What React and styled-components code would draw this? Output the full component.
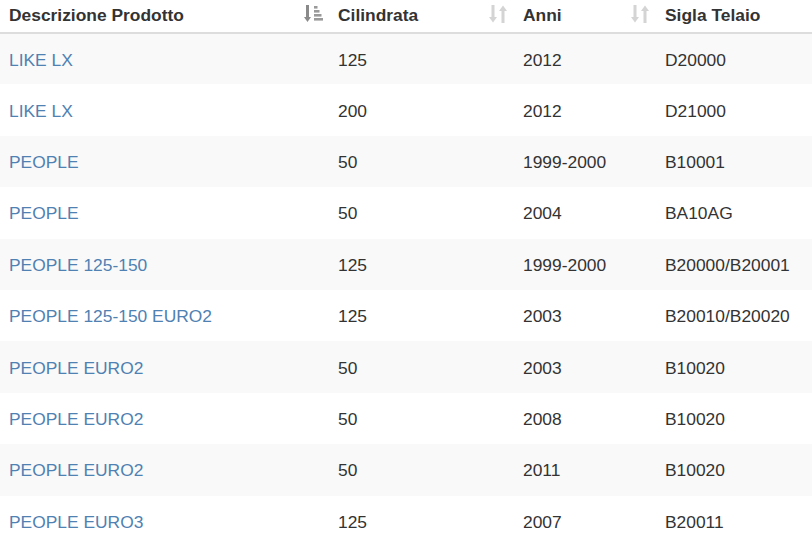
import React from "react";
import styled, { createGlobalStyle } from "styled-components";

const rows = [
  ["LIKE LX", "125", "2012", "D20000"],
  ["LIKE LX", "200", "2012", "D21000"],
  ["PEOPLE", "50", "1999-2000", "B10001"],
  ["PEOPLE", "50", "2004", "BA10AG"],
  ["PEOPLE 125-150", "125", "1999-2000", "B20000/B20001"],
  ["PEOPLE 125-150 EURO2", "125", "2003", "B20010/B20020"],
  ["PEOPLE EURO2", "50", "2003", "B10020"],
  ["PEOPLE EURO2", "50", "2008", "B10020"],
  ["PEOPLE EURO2", "50", "2011", "B10020"],
  ["PEOPLE EURO3", "125", "2007", "B20011"],
];

const GlobalStyle = createGlobalStyle`
  body {
    margin: 0;
    background: #fff;
    font-family: "Liberation Sans", Arial, sans-serif;
    font-size: 17.4px;
    color: #333;
  }
`;

// sort icons (font-awesome style)
const SortAmount = () => (
  <svg width="19" height="18" viewBox="0 0 19 18">
    <rect x="2" y="0" width="3" height="13" fill="#8a8a8a" />
    <path d="M0 12 L7 12 L3.5 17 Z" fill="#8a8a8a" />
    <rect x="10" y="1" width="3.5" height="2.6" fill="#9a9a9a" />
    <rect x="10" y="5" width="5.5" height="2.6" fill="#9a9a9a" />
    <rect x="10" y="9" width="7.5" height="2.6" fill="#9a9a9a" />
    <rect x="10" y="13" width="9" height="2.6" fill="#9a9a9a" />
  </svg>
);

const SortBoth = () => (
  <svg width="19" height="18" viewBox="0 0 19 18">
    <rect x="2.5" y="0" width="3" height="13" fill="#d4d4d4" />
    <path d="M0 12 L8 12 L4 17.5 Z" fill="#d4d4d4" />
    <rect x="12.5" y="5" width="3" height="13" fill="#d4d4d4" />
    <path d="M10 6 L18 6 L14 0.5 Z" fill="#d4d4d4" />
  </svg>
);

const App = () => {
  return (
    <>
      <GlobalStyle />
      <Table>
        <colgroup>
          <col style={{ width: 330 }} />
          <col style={{ width: 185 }} />
          <col style={{ width: 142 }} />
          <col />
        </colgroup>
        <thead>
          <tr>
            <Th>
              Descrizione Prodotto
              <Icon>
                <SortAmount />
              </Icon>
            </Th>
            <Th>
              Cilindrata
              <Icon>
                <SortBoth />
              </Icon>
            </Th>
            <Th>
              Anni
              <Icon>
                <SortBoth />
              </Icon>
            </Th>
            <Th>Sigla Telaio</Th>
          </tr>
        </thead>
        <tbody>
          {rows.map((r, i) => (
            <Row key={i} $striped={i % 2 === 0}>
              <Td>
                <Link href="#">{r[0]}</Link>
              </Td>
              <Td>{r[1]}</Td>
              <Td>{r[2]}</Td>
              <Td>{r[3]}</Td>
            </Row>
          ))}
        </tbody>
      </Table>
    </>
  );
};

export default App;

/* styles */

const Table = styled.table`
  width: 812px;
  border-collapse: collapse;
  border-spacing: 0;
  table-layout: fixed;
`;

const Th = styled.th`
  position: relative;
  height: 33px;
  padding: 0 8px 1px 8px;
  text-align: left;
  font-weight: bold;
  color: #333;
  border-bottom: 2px solid #ddd;
  box-sizing: border-box;
  vertical-align: middle;

  &:first-child {
    padding-left: 9px;
  }
`;

const Icon = styled.span`
  position: absolute;
  right: 7px;
  top: 5px;
  line-height: 0;
`;

const Row = styled.tr`
  height: 51.4px;
  background: ${(p) => (p.$striped ? "#f9f9f9" : "#fff")};
`;

const Td = styled.td`
  padding: 2px 8px 0;
  box-sizing: border-box;
  vertical-align: middle;
  white-space: nowrap;

  &:first-child {
    padding-left: 9px;
  }
`;

const Link = styled.a`
  color: #4f81b2;
  text-decoration: none;
`;
